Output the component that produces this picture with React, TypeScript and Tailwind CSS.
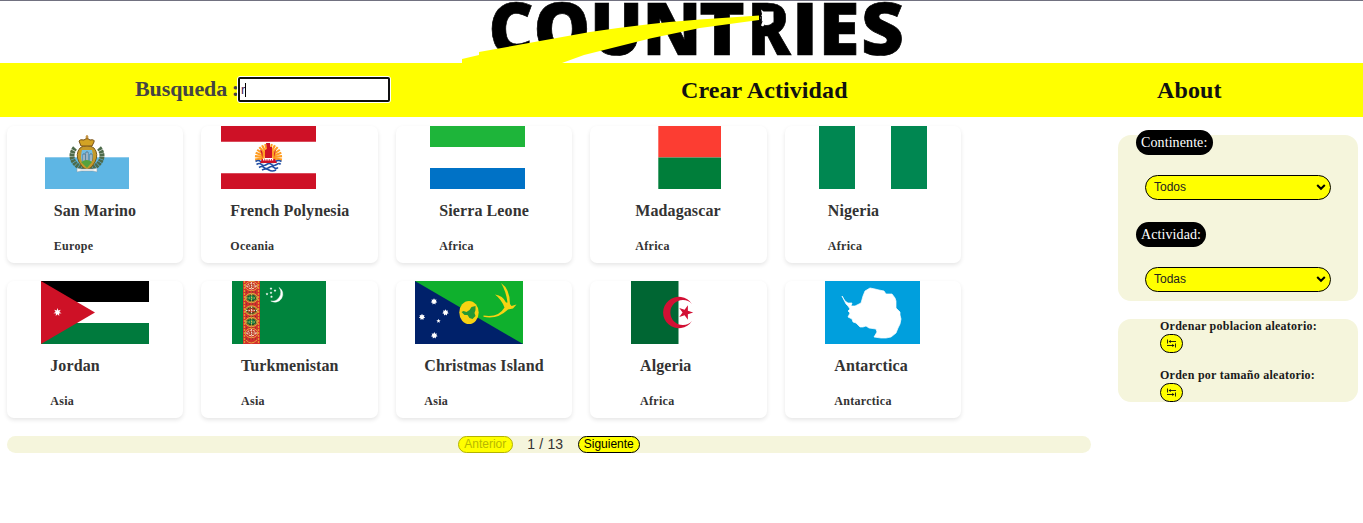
import type { ReactNode } from "react";

const starPoints = (cx: number, cy: number, r: number, n: number, inner = 0.45, turn = 0) =>
  Array.from({ length: n * 2 }, (_, i) => {
    const a = turn - Math.PI / 2 + (i * Math.PI) / n;
    const d = i % 2 ? r * inner : r;
    return `${cx + d * Math.cos(a)},${cy + d * Math.sin(a)}`;
  }).join(" ");

function Flag({ width, children }: { width: number; children: ReactNode }) {
  return (
    <svg width={width} height={63} viewBox={`0 0 ${width} 63`} className="block shrink-0">
      {children}
    </svg>
  );
}

const SanMarino = () => (
  <Flag width={84}>
    <rect width="84" height="63" fill="#fff" />
    <rect y="31.3" width="84" height="31.7" fill="#5eb6e4" />
    <g fill="none" stroke="#4d6b4b" strokeWidth="5" strokeDasharray="2.6 .5">
      <path d="M30 22C24 29 27 39 39 43" />
      <path d="M54 22C60 29 57 39 45 43" />
    </g>
    <path d="M35 22q7-5 14 0q5 6 1 14q-3 6-8 8q-5-2-8-8q-4-8 1-14Z" fill="#c69a2a" stroke="#765c20" />
    <path d="M37 24h10q2 8-1 12q-2 4-4 5q-3-2-5-5q-2-5 0-12Z" fill="#75bce0" />
    <path d="M38 35v-7h2v7M41 35v-9h2v9M45 35v-7h2v7" stroke="#45637b" fill="#dce9ef" strokeWidth=".8" />
    <path d="M36 36q6-4 11 0l-5 6Z" fill="#55a23d" />
    <path d="M36 20l-2-5q1-2 5-1l3-2l3 2q5-1 4 2l-2 4Z" fill="#d3a324" stroke="#765018" />
    <path d="M42 9v5M40.5 11h3" stroke="#b77c1b" strokeWidth="1.2" />
    <path d="M32 42l4 1h12l4-1v4l-4-1H36l-4 1Z" fill="#f8f8f3" stroke="#899bab" strokeWidth=".5" />
  </Flag>
);

const Polynesia = () => (
  <Flag width={95}>
    <rect width="95" height="63" fill="#fff" />
    <path d="M0 0h95v15.7H0zM0 47.3h95V63H0z" fill="#ce1126" />
    <g stroke="#ff9d22" strokeWidth="2.1">
      {Array.from({ length: 15 }, (_, i) => {
        const a = Math.PI - 0.15 + (i * (Math.PI + 0.3)) / 14;
        return <line key={i} x1={47.5 + 4 * Math.cos(a)} y1={31.5 + 4 * Math.sin(a)} x2={47.5 + 13.6 * Math.cos(a)} y2={31.5 + 14 * Math.sin(a)} />;
      })}
    </g>
    <g fill="none" stroke="#204da3" strokeWidth="1.7">
      <path d="M34.5 35.5q3-2 5 0t5 0t5 0t5 0t6 0M35.5 38.5q3-2 5 0t5 0t5 0t5 0t4 0M38 41.5q3-2 5 0t5 0t5 0t4 0M41 44q4-2 7 0t7 0" />
    </g>
    <path d="M39 24q4 0 2 9h13q-2-8 1-9q-3 7 1 13H39q4-6 0-13Z" fill="#ce1126" />
    <path d="M45 17h4v4h2v11h-7v-8l2-1Z" fill="#ce1126" />
    <path d="M42 33.5h11" stroke="#fff" strokeDasharray="1.4 .8" strokeWidth="2.2" />
  </Flag>
);

const SierraLeone = () => (
  <Flag width={95}>
    <rect width="95" height="63" fill="#fff" />
    <rect width="95" height="21" fill="#1eb53a" />
    <rect y="42" width="95" height="21" fill="#0072c6" />
  </Flag>
);

const Madagascar = () => (
  <Flag width={95}>
    <rect width="95" height="63" fill="#fff" />
    <rect x="32.3" width="62.7" height="31.5" fill="#fc3d32" />
    <rect x="32.3" y="31.5" width="62.7" height="31.5" fill="#007e3a" />
  </Flag>
);

const Nigeria = () => (
  <Flag width={108}>
    <rect width="108" height="63" fill="#fff" />
    <path d="M0 0h36v63H0zM72 0h36v63H72z" fill="#008751" />
  </Flag>
);

const Jordan = () => (
  <Flag width={108}>
    <rect width="108" height="63" fill="#fff" />
    <path d="M0 0h108v21H0z" fill="#000" />
    <path d="M0 42h108v21H0z" fill="#007a3d" />
    <path d="M0 0l54 31.5L0 63Z" fill="#ce1126" />
    <polygon points={starPoints(16.5, 31.3, 4.2, 7)} fill="#fff" />
  </Flag>
);

const Turkmenistan = () => (
  <Flag width={94}>
    <rect width="94" height="63" fill="#00843d" />
    <rect x="11" width="17" height="63" fill="#d22f2d" />
    <path d="M12.5 0v63M26.5 0v63" stroke="#e39a2d" strokeWidth="1.3" strokeDasharray="2 1" />
    {[5, 17, 29.5, 41, 52].map((y, i) => (
      <g key={y}>
        <ellipse cx="19.5" cy={y} rx="6.3" ry="4.7" fill={i === 0 || i === 4 ? "#d22f2d" : "#98772a"} stroke="#e4a445" />
        <ellipse cx="19.5" cy={y} rx="4.3" ry="2.7" fill={i % 2 ? "#158445" : "#bd3f27"} stroke={i === 0 || i === 4 ? "#fff0c5" : "#183f28"} strokeDasharray="2 1" />
        <path d={`M14 ${y}h11M19.5 ${y - 4}v8`} stroke={i % 2 ? "#e0c258" : "#eaded0"} strokeWidth=".9" strokeDasharray="1.5 1" />
        <path d={`M14 ${y + 6}h11`} stroke="#6b4722" strokeDasharray="1 2" />
      </g>
    ))}
    <path d="M14 59q5 6 11 0" fill="none" stroke="#e6a338" />
    <path d="M47 6.4A7.9 7.9 0 0 1 38.8 20A8.6 8.6 0 0 0 47 6.4Z" fill="#fff" stroke="#fff" strokeWidth=".4" />
    {[[39, 7.5], [43, 9.5], [35, 13], [39, 11.8], [39.5, 15.8]].map(([x, y]) => (
      <polygon key={`${x}-${y}`} points={starPoints(x, y, 1.5, 5)} fill="#fff" />
    ))}
  </Flag>
);

const Christmas = () => (
  <Flag width={108}>
    <rect width="108" height="63" fill="#0fb02d" />
    <path d="M0 0l108 63H0Z" fill="#00216a" />
    {[[19, 20.5, 3.3], [7, 36, 3.2], [30.5, 31.5, 3.3], [19.3, 54.5, 3.4]].map(([x, y, r]) => (
      <polygon key={x} points={starPoints(x, y, r, 7, 0.6)} fill="#fff" />
    ))}
    <polygon points={starPoints(23.5, 40, 2.3, 5)} fill="#fff" />
    <ellipse cx="54" cy="31.5" rx="9.7" ry="11.5" fill="#f8d313" />
    <path d="M46.500 31l2-1l3 1l3-2l2-3l4-1l0 4l-1 3l1 3l-3 3l-3-1l-2-3l-3 0Z" fill="#259834" />
    <path d="M68.5 34.5q15 2.5 21-8q-3-8-9.5-13q8 1 11 8l1.500 0Q91 10 86 2q9 6 9 21l1.500 2l5-1.500l-3.500 4l-5 1Q82 39 68.500 35.800Z" fill="#f8d313" />
  </Flag>
);

const Algeria = () => (
  <Flag width={95}>
    <rect width="95" height="63" fill="#fff" />
    <rect width="47.5" height="63" fill="#006633" />
    <path d="M61 23A15.7 15.7 0 1 0 61 40A12.5 12.5 0 1 1 61 23Z" fill="#d21034" />
    <polygon points={starPoints(54.5, 31.5, 7.7, 5, 0.382, Math.PI / 2)} fill="#d21034" />
  </Flag>
);

const Antarctica = () => (
  <Flag width={95}>
    <rect width="95" height="63" fill="#009fdd" />
    <path d="M17 15l3 5l3 2l4 0l-1 3l4 0l6-3l2-7l2-5l5-3l5 1l4 1l5 1l2 3l6 0l3 4l1 3l0 7l4 4l0 3l1 4l-1 5l-2 4l-2 5l-5 4l-5 1l-5 0l-7-1l3-5l-1-3l-7-1l-3-2l-3 1l-3 0l-4-4l-3-1l-1-3l-4-2l2-4l-2-2l2-2l-2-3l-2-2l-2-4Z" fill="#fff" stroke="#fff" strokeWidth=".7" />
  </Flag>
);

const countries = [
  { name: "San Marino", region: "Europe", flag: <SanMarino />, inset: "pl-[38px]" },
  { name: "French Polynesia", region: "Oceania", flag: <Polynesia />, inset: "pl-[20px]" },
  { name: "Sierra Leone", region: "Africa", flag: <SierraLeone />, inset: "pl-[34.5px]" },
  { name: "Madagascar", region: "Africa", flag: <Madagascar />, inset: "pl-[36px]" },
  { name: "Nigeria", region: "Africa", flag: <Nigeria />, inset: "pl-[34px]" },
  { name: "Jordan", region: "Asia", flag: <Jordan />, inset: "pl-[34.5px]" },
  { name: "Turkmenistan", region: "Asia", flag: <Turkmenistan />, inset: "pl-[30.75px]" },
  { name: "Christmas Island", region: "Asia", flag: <Christmas />, inset: "pl-[19.5px]" },
  { name: "Algeria", region: "Africa", flag: <Algeria />, inset: "pl-[40.75px]" },
  { name: "Antarctica", region: "Antarctica", flag: <Antarctica />, inset: "pl-[40.5px]" },
];

const logoLetters: [string, number, number][] = [
  ["C", 488.5, 45],
  ["O", 533.5, 57],
  ["U", 590, 53],
  ["N", 642.5, 59],
  ["T", 699, 46],
  ["R", 747.5, 43],
  ["I", 792, 26],
  ["E", 818.5, 41],
  ["S", 861, 43],
];

function Logo() {
  return (
    <svg width="448" height="62" viewBox="460 1 448 62" className="ml-[460px] block overflow-visible">
      <text y="55" stroke="#000" strokeWidth=".7" className="font-['Open_Sans',sans-serif] text-[73px] font-extrabold">
        {logoLetters.map(([letter, x, length]) => (
          <tspan key={letter} x={x} textLength={length} lengthAdjust="spacingAndGlyphs">
            {letter}
          </tspan>
        ))}
      </text>
      <path d="M462 59l17-4v-3L590 32Q650 23 700 19.500L759 15.500v4.500L700 28L650 38.500L584 55L562 63H462Z" fill="#ff0" />
      <path d="M761 9.500l2.500 2h10v11h-7l-3.500 4l-2-1l1.500-4l-2-3.500l1.500-4Z" fill="#fff" />
      <path d="M761.500 16v6" stroke="#222" />
    </svg>
  );
}

function Chevron() {
  return (
    <svg width="10" height="8" viewBox="0 0 10 8" className="block">
      <path d="M1.2 2l3.8 3.8L8.8 2" fill="none" stroke="#000" strokeWidth="2" />
    </svg>
  );
}

function Filter({ label, value, className, pill }: { label: string; value: string; className: string; pill: string }) {
  return (
    <div className={className}>
      <div className={`ml-[18px] flex h-[25px] items-center rounded-[12.5px] bg-black px-[5px] pt-[1px] text-[14px] leading-none tracking-[0.1px] text-white ${pill}`}>{label}</div>
      <button className="mt-5 ml-[27px] flex h-[25px] w-[186px] items-center justify-between rounded-[13px] border border-black bg-[#ff0] pr-[4px] pb-px pl-[8px] font-['Liberation_Sans',sans-serif] text-[12px] text-[#222]">
        {value}
        <Chevron />
      </button>
    </div>
  );
}

function Sorter({ label, className }: { label: string; className: string }) {
  return (
    <div className={className}>
      <div className="h-[15px] text-[12px] leading-[14px] font-bold tracking-[0.26px] whitespace-nowrap text-[#1a1a1a]">{label}</div>
      <button className="flex h-[19px] w-[23px] items-center justify-center rounded-[10px] border border-black bg-[#ff0]">
        <svg width="9" height="9" viewBox="0 0 9 9" fill="none" stroke="#111">
          <path d="M.5 .500v4M2 2.500h7M8.500 4.500v4M0 6.500h7" strokeWidth=".9" />
          <path d="M3.800 .9L1.500 2.500l2.300 1.600ZM5.200 4.900l2.300 1.600l-2.300 1.600Z" fill="#111" stroke="none" />
        </svg>
      </button>
    </div>
  );
}

export default function App() {
  return (
    <div className="h-[523px] w-[1363px] overflow-hidden bg-white font-['Liberation_Serif',serif]">
      <header className="h-[63px] border-t border-[#717180]">
        <Logo />
      </header>
      <nav className="flex h-[54px] bg-[#ff0] pl-[135px] text-[24px] font-bold text-[#111]">
        <label className="flex w-[546px] pt-[13px]">
          <span className="w-[102px] shrink-0 text-[22px] leading-[26px] tracking-[-0.1px] whitespace-nowrap text-[#444] [word-spacing:-0.7px]">Busqueda :</span>
          <span className="flex h-[27px] w-[154px] items-center rounded-[3px] border border-white bg-white">
            <span className="flex h-[25px] w-[152px] items-center rounded-[2px] border-2 border-[#101010] pl-[1px] font-['Liberation_Sans',sans-serif] text-[13px] font-normal text-[#402050]">
              r<span className="h-[14px] w-px bg-black" />
            </span>
          </span>
        </label>
        <a className="w-[476px] pt-[13px] leading-7 tracking-[0.1px]">Crear Actividad</a>
        <a className="pt-[13px] leading-7 tracking-[0.1px]">About</a>
      </nav>
      <div className="flex">
        <main className="w-[1118px] pt-[9px] pl-[6.75px]">
          <section className="grid grid-cols-[repeat(5,176.5px)] gap-x-[18px] gap-y-[18px]">
            {countries.map((c) => (
              <article key={c.name} className={`h-[137px] rounded-[7px] shadow-[0_2px_4px_rgba(0,0,0,0.1)] ${c.inset}`}>
                {c.flag}
                <div className="pl-[9px] font-bold whitespace-nowrap text-[#333]">
                  <h2 className="mt-[13px] text-[16px] leading-[18px] tracking-[0.1px]">{c.name}</h2>
                  <p className="mt-[19px] text-[12px] leading-[14px] tracking-[0.3px]">{c.region}</p>
                </div>
              </article>
            ))}
          </section>
          <div className="mt-[18px] flex h-[17px] w-[1084px] rounded-[9px] bg-[#f5f5dc] pl-[451px] font-['Liberation_Sans',sans-serif] text-[12px]">
            <button className="h-[17px] w-[55px] rounded-[9px] border border-[#b3b300] bg-[#ff0] leading-[15px] text-[#b8b800]">Anterior</button>
            <span className="w-[65px] text-center text-[14px] leading-[17px] tracking-[0.2px] text-[#333]">1 / 13</span>
            <button className="h-[17px] w-[62px] rounded-[9px] border border-black bg-[#ff0] leading-[15px] text-black">Siguiente</button>
          </div>
        </main>
        <aside className="w-[240px] pt-[18px]">
          <section className="h-[166px] rounded-[13px] bg-[#f5f5dc]">
            <Filter label="Continente:" value="Todos" pill="w-[77px]" className="relative -top-[5px] h-[92px]" />
            <Filter label="Actividad:" value="Todas" pill="w-[70px]" className="relative -top-[5px]" />
          </section>
          <section className="mt-[18px] h-[83px] rounded-[13px] bg-[#f5f5dc] pl-[42px]">
            <Sorter label="Ordenar poblacion aleatorio:" className="h-[49px]" />
            <Sorter label="Orden por tamaño aleatorio:" className="h-[34px]" />
          </section>
        </aside>
      </div>
    </div>
  );
}
